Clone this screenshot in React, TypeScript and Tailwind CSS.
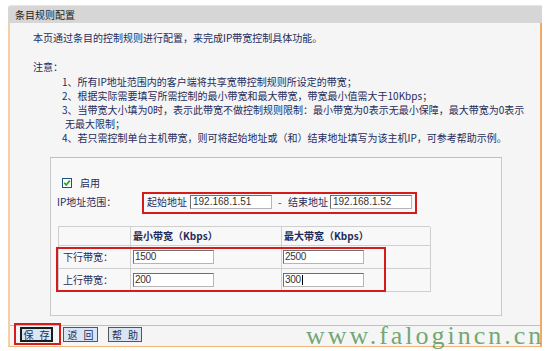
import React from "react";

function Checkbox() {
  return (
    <svg width="10" height="10" viewBox="0 0 10 10" className="block">
      <rect x="0.5" y="0.5" width="9" height="9" fill="#ffffff" stroke="#1c5180" />
      <path d="M2.2 4.8 L4.2 7 L7.8 2.6" stroke="#23a323" strokeWidth="1.7" fill="none" />
    </svg>
  );
}

function IpInput({ value }: { value: string }) {
  return (
    <div className="w-[82px] h-[14px] bg-white border border-[#6e6e6e] border-b-[#b5b5b5] border-r-[#b5b5b5] pl-[2px] flex items-center font-['Liberation_Sans',sans-serif] text-[10px] text-[#333] leading-none">
      {value}
    </div>
  );
}

function RateInput({ value, cursor }: { value: string; cursor?: boolean }) {
  return (
    <div className="w-[81px] h-[14px] bg-white border border-[#6e6e6e] border-b-[#b5b5b5] border-r-[#b5b5b5] pl-[1px] flex items-center font-['Liberation_Sans',sans-serif] text-[10px] tracking-[-0.3px] text-[#333] leading-none">
      {value}
      {cursor ? <span className="ml-[1px] w-[1px] h-[10px] bg-black" /> : null}
    </div>
  );
}

function Btn({ a, b, focus, w }: { a: string; b: string; focus?: boolean; w: string }) {
  return (
    <div
      className={
        focus
          ? "h-[15px] w-[33px] bg-[#d7e5f5] border-2 border-[#1a1a1a] flex items-center justify-center gap-[6px] text-[10px] leading-none text-[#1f2c5c]"
          : "h-[15px] bg-[#d7e5f5] border border-[#555] flex items-center justify-center gap-[6px] text-[10px] leading-none text-[#1f2c5c] " + w
      }
    >
      <span>{a}</span>
      <span>{b}</span>
    </div>
  );
}

export default function App() {
  return (
    <div className="relative w-[548px] h-[351px] overflow-hidden bg-white text-[10px] leading-[14px] text-[#1f2c5c] font-['Noto_Sans_CJK_SC','Noto_Sans',sans-serif]">
      <div className="ml-[8px] mt-[5px] w-[534px]">
        <div className="h-[18px] bg-[#d6d6d6] pl-[7px] flex items-center text-[10px] text-[#222] rounded-tl-[3px] border-t border-[#e6e6e6]">
          条目规则配置
        </div>
        <div className="h-[324px] border-l-2 border-r-2 border-b border-l-[#f5cfa5] border-r-[#eeaa66] border-b-[#f0b37a] bg-[#f5f5f5] pt-[8px]">
          <div className="pl-[23px] h-[14px] whitespace-nowrap">
            本页通过条目的控制规则进行配置，来完成IP带宽控制具体功能。
          </div>
          <div className="pl-[23px] h-[14px] mt-[15px] whitespace-nowrap">注意：</div>
          <div className="mt-[1px] whitespace-nowrap">
            <div className="pl-[52px] h-[14px]">1、所有IP地址范围内的客户端将共享宽带控制规则所设定的带宽；</div>
            <div className="pl-[52px] h-[14px]">2、根据实际需要填写所需控制的最小带宽和最大带宽，带宽最小值需大于10Kbps；</div>
            <div className="pl-[52px] h-[14px]">3、当带宽大小填为0时，表示此带宽不做控制规则限制：最小带宽为0表示无最小保障，最大带宽为0表示</div>
            <div className="pl-[55px] h-[14px]">无最大限制；</div>
            <div className="pl-[52px] h-[14px]">4、若只需控制单台主机带宽，则可将起始地址或（和）结束地址填写为该主机IP，可参考帮助示例。</div>
          </div>

          <div className="ml-[40px] mt-[12px] w-[452px] h-[159px] border border-[#c9c9c9] border-t-[#bdbdbd] bg-[#f8f8f8] pt-[20px]">
            <div className="ml-[11px] h-[10px] flex items-center">
              <Checkbox />
              <span className="ml-[8px] leading-none">启用</span>
            </div>
            <div className="mt-[7px] ml-[6px] h-[14px] flex items-center whitespace-nowrap">
              <span className="w-[90px]">IP地址范围：</span>
              <span className="w-[43px]">起始地址</span>
              <IpInput value="192.168.1.51" />
              <span className="ml-[6px] w-[10px]">-</span>
              <span className="w-[42px]">结束地址</span>
              <IpInput value="192.168.1.52" />
            </div>
            <div className="mt-[17px] ml-[7px] w-[372px] border-t border-l border-[#cfcfcf] grid grid-cols-[72px_151px_149px]">
              <div className="h-[19px] border-r border-b border-[#cfcfcf]" />
              <div className="h-[19px] border-r border-b border-[#cfcfcf] pl-[2px] flex items-center font-bold whitespace-nowrap">最小带宽（Kbps）</div>
              <div className="h-[19px] border-r border-b border-[#cfcfcf] pl-[2px] flex items-center font-bold whitespace-nowrap">最大带宽（Kbps）</div>

              <div className="h-[23px] border-r border-b border-[#cfcfcf] pl-[4px] flex items-center">下行带宽：</div>
              <div className="h-[23px] border-r border-b border-[#cfcfcf] pl-[2px] flex items-center"><RateInput value="1500" /></div>
              <div className="h-[23px] border-r border-b border-[#cfcfcf] pl-[1px] flex items-center"><RateInput value="2500" /></div>

              <div className="h-[23px] border-r border-b border-[#cfcfcf] pl-[4px] flex items-center">上行带宽：</div>
              <div className="h-[23px] border-r border-b border-[#cfcfcf] pl-[2px] flex items-center"><RateInput value="200" /></div>
              <div className="h-[23px] border-r border-b border-[#cfcfcf] pl-[1px] flex items-center"><RateInput value="300" cursor /></div>
            </div>
          </div>

          <div className="mt-[9px] border-t border-[#f0b37a] pt-[1px] pl-[10px] flex items-center">
            <Btn a="保" b="存" focus w="" />
            <div className="ml-[10px]"><Btn a="返" b="回" w="w-[35px]" /></div>
            <div className="ml-[10px]"><Btn a="帮" b="助" w="w-[34px]" /></div>
          </div>
        </div>
      </div>

      {/* annotation boxes */}
      <div className="absolute left-[142px] top-[192px] w-[275px] h-[22px] border-2 border-[#d41c1c]" />
      <div className="absolute left-[56px] top-[247px] w-[330px] h-[45px] border-2 border-[#d41c1c]" />
      <div className="absolute left-[14px] top-[323px] w-[47px] h-[22px] border-2 border-[#d41c1c]" />

      {/* watermark */}
      <div className="absolute left-[306px] top-[323px] whitespace-nowrap font-['Liberation_Serif',serif] text-[26px] leading-[26px] tracking-[3px] text-[#5f9d62]/90">
        www.falogincn.cn
      </div>
    </div>
  );
}
